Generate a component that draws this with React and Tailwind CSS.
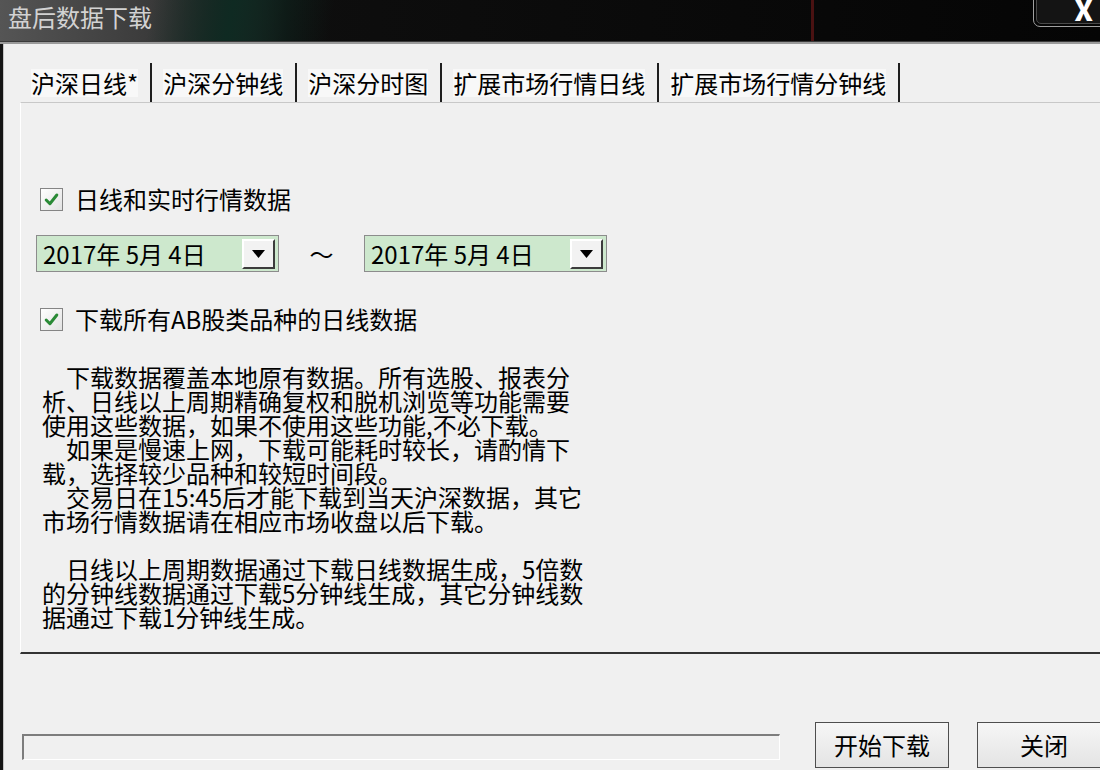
import React from 'react';

const FONT = "font-['Noto_Sans_CJK_SC','Noto_Sans_CJK_JP',sans-serif]";

const tabs = ['沪深日线*', '沪深分钟线', '沪深分时图', '扩展市场行情日线', '扩展市场行情分钟线'];

const notes = [
  [true, '下载数据覆盖本地原有数据。所有选股、报表分'],
  [false, '析、日线以上周期精确复权和脱机浏览等功能需要'],
  [false, '使用这些数据，如果不使用这些功能,不必下载。'],
  [true, '如果是慢速上网，下载可能耗时较长，请酌情下'],
  [false, '载，选择较少品种和较短时间段。'],
  [true, '交易日在15:45后才能下载到当天沪深数据，其它'],
  [false, '市场行情数据请在相应市场收盘以后下载。'],
  [false, ''],
  [true, '日线以上周期数据通过下载日线数据生成，5倍数'],
  [false, '的分钟线数据通过下载5分钟线生成，其它分钟线数'],
  [false, '据通过下载1分钟线生成。'],
];

const CheckRow = ({ label }) => (
  <div className="flex items-center ml-[19px] h-[24px]">
    <div className="w-[23px] h-[23px] border border-[#858585] bg-gradient-to-br from-[#ffffff] to-[#e2e2e2] flex items-center justify-center">
      <svg width="17" height="17" viewBox="0 0 16 16">
        <path d="M3 8.5 L6.5 12 L13 3.8" fill="none" stroke="#2a8a36" strokeWidth="2.8" strokeLinecap="round" strokeLinejoin="round" />
      </svg>
    </div>
    <span className="ml-[12px] text-[24px] leading-[24px] text-black">{label}</span>
  </div>
);

const DatePicker = () => (
  <div className="w-[243px] h-[37px] border border-[#8c8c8c] bg-[#cde8cd] flex items-center justify-between pl-[6px] pr-[3px]">
    <span className="text-[24px] leading-[24px] text-black whitespace-pre">2017年 5月 4日</span>
    <div className="w-[33px] h-[30px] bg-[#f2f2f2] border-t-2 border-l-2 border-t-white border-l-white border-r-2 border-b-2 border-r-[#3c3c3c] border-b-[#3c3c3c] flex items-center justify-center">
      <svg width="13" height="8" viewBox="0 0 13 8">
        <path d="M0 0 H13 L6.5 8 Z" fill="#000" />
      </svg>
    </div>
  </div>
);

export default function App() {
  return (
    <div className={`w-[1100px] h-[770px] overflow-hidden flex flex-col bg-black ${FONT}`}>
      {/* title bar */}
      <div className="h-[41px] flex justify-between bg-[linear-gradient(90deg,transparent_811px,#4a1212_811px,#4a1212_814px,transparent_814px),linear-gradient(100deg,transparent_150px,#0f2a22_230px,transparent_330px),linear-gradient(90deg,#555_0%,#3a3a3a_14%,#0e0e0e_26%,#050505_100%)]">
        <span className="pl-[8px] pt-[5px] text-[24px] leading-[24px] text-[#d2d2d2]">盘后数据下载</span>
        <div className="w-[78px] h-[37px] -mt-[10px] -mr-[11px] rounded-[7px] border border-[#a0a0a0] p-[2px]">
          <div className="w-full h-full rounded-[5px] border border-[#4a4a4a] bg-[#141414] flex justify-end items-end pr-[14px] pb-[3px]">
            <span className="text-[28px] leading-[22px] font-black text-white">X</span>
          </div>
        </div>
      </div>
      <div className="h-[1px] bg-[#3a3a3a]" />
      <div className="h-[2px] bg-[#9a9a9a]" />

      {/* body */}
      <div className="flex-1 flex bg-[#f0f0f0] border-l-[3px] border-[#141414]">
        <div className="flex-1 flex flex-col pl-[16px] border-l border-[#c4c4c4]">
          {/* tab strip */}
          <div className="flex mt-[19px] h-[39px]">
            {tabs.map((t) => (
              <div key={t} className="flex items-center pl-[11px] pr-[12px] border-r-2 border-[#1e1e1e]">
                <span className="text-[24px] leading-[28px] text-black bg-[#f8f8f8]">{t}</span>
              </div>
            ))}
          </div>

          {/* tab panel */}
          <div className="h-[552px] flex flex-col border-l border-t border-l-white border-t-[#c8c8c8] border-b-2 border-b-[#333]">
            <div className="mt-[84px]">
              <CheckRow label="日线和实时行情数据" />
            </div>
            <div className="flex items-center mt-[24px] ml-[15px]">
              <DatePicker />
              <span className="w-[85px] text-center text-[24px] leading-[24px] text-black">～</span>
              <DatePicker />
            </div>
            <div className="mt-[35px]">
              <CheckRow label="下载所有AB股类品种的日线数据" />
            </div>
            <div className="mt-[34px] ml-[21px]">
              {notes.map(([indent, text], i) => (
                <div
                  key={i}
                  className={`h-[24px] text-[24px] leading-[24px] text-black whitespace-nowrap ${indent ? 'pl-[24px]' : ''}`}
                >
                  {text}
                </div>
              ))}
            </div>
          </div>

          {/* bottom bar */}
          <div className="flex-1 flex items-end pb-[2px]">
            <div className="w-[758px] h-[26px] ml-[2px] mb-[8px] border-t-2 border-l-2 border-t-[#7d7d7d] border-l-[#7d7d7d] border-b border-r border-b-white border-r-white bg-[#f0f0f0]" />
            <button className="ml-[35px] w-[134px] h-[46px] border border-[#4e4e4e] bg-gradient-to-b from-[#f6f6f6] to-[#e4e4e4] text-[24px] leading-[24px] text-black">
              开始下载
            </button>
            <button className="ml-[28px] w-[134px] h-[46px] border border-[#4e4e4e] bg-gradient-to-b from-[#f6f6f6] to-[#e4e4e4] text-[24px] leading-[24px] text-black">
              关闭
            </button>
          </div>
        </div>
      </div>
    </div>
  );
}
